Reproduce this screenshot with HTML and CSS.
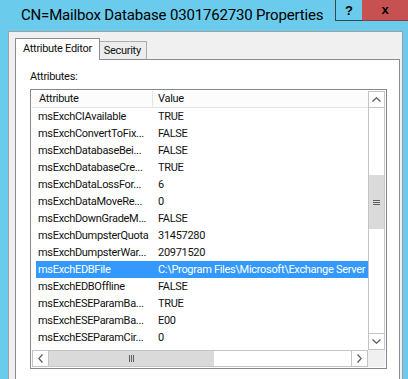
FILE: index.html
```html
<!DOCTYPE html>
<html lang="en">
<head>
  <meta charset="UTF-8" />
  <title>CN=Mailbox Database 0301762730 Properties</title>
  <link rel="stylesheet" href="styles.css">
</head>
<body>
  <div class="window">
    <div class="titlebar">
      <span class="title">CN=Mailbox Database 0301762730 Properties</span>
      <div class="caption-buttons">
        <div class="caption-btn help">?</div>
        <div class="caption-btn close">x</div>
      </div>
    </div>

    <div class="client">
      <!-- Tabs -->
      <div class="tabs">
        <div class="tab active">Attribute Editor</div>
        <div class="tab">Security</div>
      </div>

      <div class="tab-page">
        <div class="field-label">Attributes:</div>

        <div class="listview">
          <div class="lv-body">
            <div class="lv-header">
              <div class="col-name">Attribute</div>
              <div class="col-value">Value</div>
            </div>
            <div class="row"><span class="name">msExchCIAvailable</span><span class="value">TRUE</span></div>
            <div class="row"><span class="name">msExchConvertToFix...</span><span class="value">FALSE</span></div>
            <div class="row"><span class="name">msExchDatabaseBei...</span><span class="value">FALSE</span></div>
            <div class="row"><span class="name">msExchDatabaseCre...</span><span class="value">TRUE</span></div>
            <div class="row"><span class="name">msExchDataLossFor...</span><span class="value">6</span></div>
            <div class="row"><span class="name">msExchDataMoveRe...</span><span class="value">0</span></div>
            <div class="row"><span class="name">msExchDownGradeM...</span><span class="value">FALSE</span></div>
            <div class="row"><span class="name">msExchDumpsterQuota</span><span class="value">31457280</span></div>
            <div class="row"><span class="name">msExchDumpsterWar...</span><span class="value">20971520</span></div>
            <div class="row selected"><span class="name">msExchEDBFile</span><span class="value">C:\Program Files\Microsoft\Exchange Server</span></div>
            <div class="row"><span class="name">msExchEDBOffline</span><span class="value">FALSE</span></div>
            <div class="row"><span class="name">msExchESEParamBa...</span><span class="value">TRUE</span></div>
            <div class="row"><span class="name">msExchESEParamBa...</span><span class="value">E00</span></div>
            <div class="row"><span class="name">msExchESEParamCir...</span><span class="value">0</span></div>
          </div>

          <!-- vertical scrollbar -->
          <div class="vscroll">
            <div class="sb-btn up">
              <svg width="9" height="5" viewBox="0 0 9 5"><polyline points="0.5,4.5 4.5,0.8 8.5,4.5" /></svg>
            </div>
            <div class="sb-track">
              <div class="sb-thumb v-thumb">
                <svg width="7" height="5" viewBox="0 0 7 5"><rect x="0" y="0" width="7" height="1"/><rect x="0" y="2" width="7" height="1"/><rect x="0" y="4" width="7" height="1"/></svg>
              </div>
            </div>
            <div class="sb-btn down">
              <svg width="9" height="5" viewBox="0 0 9 5"><polyline points="0.5,0.5 4.5,4.2 8.5,0.5" /></svg>
            </div>
          </div>

          <!-- horizontal scrollbar -->
          <div class="hscroll">
            <div class="sb-btn left">
              <svg width="5" height="9" viewBox="0 0 5 9"><polyline points="4.5,0.5 0.8,4.5 4.5,8.5" /></svg>
            </div>
            <div class="sb-thumb h-thumb">
              <svg width="5" height="7" viewBox="0 0 5 7"><rect x="0" y="0" width="1" height="7"/><rect x="2" y="0" width="1" height="7"/><rect x="4" y="0" width="1" height="7"/></svg>
            </div>
            <div class="sb-track"></div>
            <div class="sb-btn right">
              <svg width="5" height="9" viewBox="0 0 5 9"><polyline points="0.5,0.5 4.2,4.5 0.5,8.5" /></svg>
            </div>
          </div>

          <div class="sb-corner"></div>
        </div>
      </div>
    </div>
  </div>
</body>
</html>
```
FILE: styles.css
```css
body {
  margin: 0;
  background-color: #6bcbec;
  font-family: Roboto, "Liberation Sans", sans-serif;
  font-size: 11px;
  letter-spacing: -0.3px;
  color: #111;
  overflow: hidden;
}
.window {
  width: 408px;
  height: 379px;
  display: flex;
  flex-direction: column;
}
.titlebar {
  height: 31px;
  flex: none;
  display: flex;
  justify-content: space-between;
  align-items: flex-start;
}
.title {
  padding-left: 21px;
  font-size: 15px;
  letter-spacing: -0.17px;
  line-height: 31px;
  color: #000;
}
.caption-buttons {
  display: flex;
}
.caption-btn {
  height: 21px;
  box-sizing: border-box;
  display: flex;
  align-items: center;
  justify-content: center;
  font-family: "Liberation Sans", sans-serif;
  font-weight: bold;
  font-size: 13px;
  letter-spacing: 0;
  color: #000;
}
.help {
  width: 27px;
  border-left: 1px solid #39474f;
  border-bottom: 1px solid #39474f;
}
.close {
  width: 46px;
  background-color: #c75050;
  border-bottom: 1px solid #8f3c3c;
  padding-bottom: 2px;
}
.client {
  flex: 1;
  min-height: 0;
  margin: 0 5px 0 8px;
  padding: 6px 2px 0 6px;
  background-color: #f0f0f0;
  border: 1px solid #a0a0a0;
  border-bottom: none;
  display: flex;
  flex-direction: column;
}
.tabs {
  height: 21px;
  flex: none;
  display: flex;
  align-items: flex-end;
}
.tab {
  box-sizing: border-box;
  height: 18px;
  padding: 1px 5px 0 4px;
  line-height: 15px;
  background-color: #ececec;
  border: 1px solid #acacac;
  border-bottom: none;
  border-left: none;
}
.tab.active {
  position: relative;
  z-index: 1;
  height: 22px;
  margin-bottom: -1px;
  padding: 2px 7px 0 7px;
  background-color: #fff;
  border: 1px solid #898c95;
  border-bottom: none;
}
/* the page continues below the visible part of the dialog */
.tab-page {
  flex: 1;
  min-height: 0;
  padding: 10px 0 0 14px;
  background-color: #fff;
  border: 1px solid #898c95;
  border-bottom: none;
}
.field-label {
  line-height: 14px;
  margin-bottom: 5px;
}
.listview {
  width: 357px;
  height: 280px;
  box-sizing: border-box;
  padding: 1px;
  border: 1px solid #828790;
  display: grid;
  grid-template-columns: 1fr 17px;
  grid-template-rows: 1fr 17px;
}
.lv-body {
  overflow: hidden;
  min-width: 0;
}
.lv-header {
  display: flex;
  height: 17px;
  box-sizing: border-box;
  line-height: 16px;
  background-color: #fcfcfc;
  border-bottom: 1px solid #e5e5e5;
}
.lv-header .col-name {
  width: 121px;
  flex: none;
  box-sizing: border-box;
  padding-left: 7px;
  border-right: 1px solid #e5e5e5;
}
.lv-header .col-value {
  padding-left: 5px;
}
.row {
  display: flex;
  height: 17px;
  margin-left: 4px;
  line-height: 17px;
  white-space: nowrap;
}
.row .name {
  width: 116px;
  flex: none;
  box-sizing: border-box;
  padding-left: 2px;
}
.row .value {
  flex: 1;
  min-width: 0;
  overflow: hidden;
  padding-left: 6px;
}
.row.selected {
  background-color: #3399ff;
  color: #fff;
}
/* scrollbars */
.vscroll,
.hscroll {
  box-sizing: border-box;
  border: 1px solid #c4c4c4;
  background-color: #fff;
  display: flex;
}
.vscroll {
  flex-direction: column;
}
.sb-btn {
  flex: none;
  display: flex;
  align-items: center;
  justify-content: center;
  box-sizing: border-box;
}
.sb-btn svg polyline {
  fill: none;
  stroke: #606060;
  stroke-width: 1.3;
}
.sb-btn.up {
  height: 16px;
  border-bottom: 1px solid #c4c4c4;
}
.sb-btn.down {
  height: 16px;
  border-top: 1px solid #c4c4c4;
}
.sb-btn.left {
  width: 16px;
  border-right: 1px solid #c4c4c4;
}
.sb-btn.right {
  width: 16px;
  border-left: 1px solid #c4c4c4;
}
.sb-track {
  flex: 1;
}
.sb-thumb {
  display: flex;
  align-items: center;
  justify-content: center;
  background-color: #dadada;
}
.sb-thumb svg rect {
  fill: #606060;
}
.v-thumb {
  height: 54px;
  margin-top: 67px;
}
.h-thumb {
  width: 165px;
  flex: none;
}
.sb-corner {
  background-color: #f0f0f0;
}
```
